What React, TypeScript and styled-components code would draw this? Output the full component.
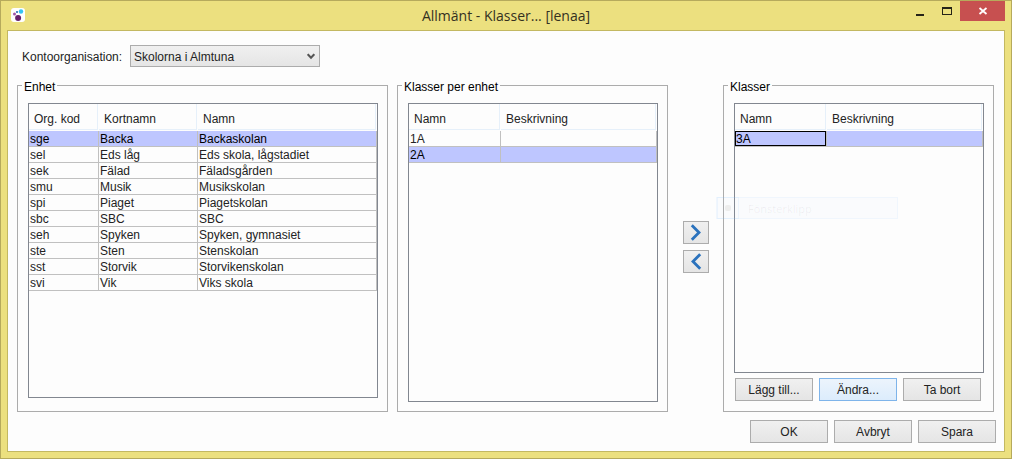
import React from 'react';
import styled, { createGlobalStyle, css } from 'styled-components';

const uiFont = '"Liberation Sans", Arial, sans-serif';
const titleFont = '"Open Sans", "Segoe UI", sans-serif';

const GlobalStyle = createGlobalStyle`
  *, *::before, *::after { box-sizing: border-box; }
  body {
    margin: 0;
    font-family: ${uiFont};
    font-size: 12px;
    line-height: 15px;
    color: #232323;
  }
  button, select { font: inherit; color: inherit; }
`;

const Window = styled.div`
  display: flex;
  flex-direction: column;
  min-height: 100vh;
  padding: 0 6px 6px;
  background: #ece07f;
  border: 1px solid #b6aa5c;
`;

const TitleBar = styled.header`
  display: grid;
  grid-template-columns: 1fr auto 1fr;
  height: 29px;
`;

const AppIcon = styled.svg`
  margin: 7px 0 0 4px;
`;

const Title = styled.h1`
  margin: 0;
  font-family: ${titleFont};
  font-size: 14px;
  font-weight: 400;
  line-height: 29px;
  color: #34311f;
`;

const Caption = styled.div`
  display: flex;
  justify-content: flex-end;
  align-items: flex-start;
`;

const CaptionButton = styled.button<{ $close?: boolean }>`
  display: flex;
  align-items: center;
  justify-content: center;
  width: ${(p) => (p.$close ? 45 : 26)}px;
  height: 20px;
  padding: 0;
  border: 0;
  background: ${(p) => (p.$close ? '#c75050' : 'transparent')};
`;

const Client = styled.main`
  flex: 1;
  display: flex;
  flex-direction: column;
  padding: 14px 8px 8px 9px;
  background: #fdfdfd;
  border: 1px solid #c3b861;
`;

const Field = styled.div`
  display: flex;
  align-items: center;
  margin-bottom: 9px;
  padding-left: 5px;
`;

const FieldLabel = styled.label`
  width: 108px;
  padding-top: 2px;
`;

const SelectBox = styled.div`
  position: relative;
  width: 190px;
`;

const Select = styled.select`
  display: block;
  appearance: none;
  width: 100%;
  height: 22px;
  padding: 2px 24px 0 3px;
  border: 1px solid #acacac;
  border-radius: 0;
  background: linear-gradient(#f0f0f0, #e5e5e5);
`;

const SelectArrow = styled.svg`
  position: absolute;
  top: 8px;
  right: 5px;
  pointer-events: none;
`;

const Columns = styled.div`
  flex: 1;
  display: grid;
  grid-template-columns: minmax(0, 371fr) minmax(0, 271fr) 37px minmax(0, 271fr);
  column-gap: 9px;
  padding-right: 2px;
`;

const Group = styled.fieldset`
  display: flex;
  flex-direction: column;
  min-width: 0;
  margin: 0;
  padding: 0;
  border: 1px solid #acacac;
`;

const Legend = styled.legend`
  margin-left: 4px;
  padding: 4px 2px 0;
  color: #000;
`;

const GroupBody = styled.div<{ $bottom: number }>`
  position: relative;
  flex: 1;
  display: flex;
  flex-direction: column;
  padding: 8px 9px ${(p) => p.$bottom}px 10px;
`;

const TableFrame = styled.div`
  flex: 1;
  border: 1px solid #828790;
`;

const Table = styled.table`
  width: 100%;
  table-layout: fixed;
  border-collapse: separate;
  border-spacing: 0;
`;

const HeadCell = styled.th`
  position: relative;
  height: 27px;
  padding: 3px 0 0 5px;
  font-weight: 400;
  text-align: left;

  &::after {
    content: '';
    position: absolute;
    inset: 0 1px 1px 0;
    border: solid #e6f0fa;
    border-width: 0 1px 1px 0;
  }
`;

const Row = styled.tr<{ $selected?: boolean }>`
  background: ${(p) => (p.$selected ? '#bec6ff' : 'transparent')};
  color: ${(p) => (p.$selected ? '#000' : 'inherit')};
`;

const Cell = styled.td<{ $focused?: boolean }>`
  height: 16px;
  padding: 2px 0 0 1px;
  line-height: 13px;
  border: solid #c0c0c0;
  border-width: 0 1px 1px 0;
  white-space: nowrap;
  ${(p) =>
    p.$focused &&
    css`
      box-shadow: inset 0 0 0 1px #000;
    `}
`;

const Movers = styled.div`
  display: flex;
  flex-direction: column;
  justify-content: center;
  gap: 6px;
  padding: 6px 5px 0 6px;
`;

const Button = styled.button<{ $hot?: boolean; $icon?: boolean }>`
  display: flex;
  align-items: center;
  justify-content: center;
  width: ${(p) => (p.$icon ? 26 : 78)}px;
  height: 23px;
  padding: ${(p) => (p.$icon ? 0 : 2)}px 0 0;
  border: 1px solid ${(p) => (p.$hot ? '#7eb4ea' : '#acacac')};
  background: ${(p) =>
    p.$hot ? 'linear-gradient(#ecf4fc, #dcecfc)' : 'linear-gradient(#f0f0f0, #e5e5e5)'};
`;

const GroupActions = styled.div`
  display: flex;
  gap: 6px;
  padding: 5px 0 0 1px;
`;

const Footer = styled.footer`
  display: flex;
  justify-content: flex-end;
  gap: 6px;
  margin-top: 8px;
`;

const FadingItem = styled.div`
  position: absolute;
  top: 102px;
  left: -8px;
  display: flex;
  align-items: center;
  gap: 9px;
  width: 182px;
  height: 22px;
  border: 1px solid rgba(120, 190, 255, 0.07);
  background: rgba(150, 205, 255, 0.03);
  font-family: ${titleFont};
  font-size: 11px;
  color: rgba(70, 50, 30, 0.07);
  pointer-events: none;
`;

const FadingMark = styled.span`
  display: flex;
  align-items: center;
  justify-content: center;
  width: 22px;
  height: 22px;
  border: 1px solid rgba(120, 190, 255, 0.1);

  &::before {
    content: '';
    width: 6px;
    height: 6px;
    border-radius: 2px;
    background: rgba(70, 50, 30, 0.07);
  }
`;

type DataTableProps = {
  label: string;
  columns: { title: string; width?: number }[];
  rows: string[][];
  selected: number;
  focusFirst?: boolean;
};

function DataTable({ label, columns, rows, selected, focusFirst }: DataTableProps) {
  return (
    <TableFrame>
      <Table aria-label={label}>
        <colgroup>
          {columns.map((c) => (
            <col key={c.title} width={c.width} />
          ))}
        </colgroup>
        <thead>
          <tr>
            {columns.map((c) => (
              <HeadCell key={c.title} scope="col">
                {c.title}
              </HeadCell>
            ))}
          </tr>
        </thead>
        <tbody>
          {rows.map((row, r) => (
            <Row key={row[0]} $selected={r === selected} aria-selected={r === selected}>
              {row.map((text, i) => (
                <Cell key={i} $focused={focusFirst && r === selected && i === 0}>
                  {text}
                </Cell>
              ))}
            </Row>
          ))}
        </tbody>
      </Table>
    </TableFrame>
  );
}

const units = [
  ['sge', 'Backa', 'Backaskolan'],
  ['sel', 'Eds låg', 'Eds skola, lågstadiet'],
  ['sek', 'Fälad', 'Fäladsgården'],
  ['smu', 'Musik', 'Musikskolan'],
  ['spi', 'Piaget', 'Piagetskolan'],
  ['sbc', 'SBC', 'SBC'],
  ['seh', 'Spyken', 'Spyken, gymnasiet'],
  ['ste', 'Sten', 'Stenskolan'],
  ['sst', 'Storvik', 'Storvikenskolan'],
  ['svi', 'Vik', 'Viks skola'],
];

const unitColumns = [
  { title: 'Org. kod', width: 70 },
  { title: 'Kortnamn', width: 99 },
  { title: 'Namn' },
];

const classColumns = [{ title: 'Namn', width: 92 }, { title: 'Beskrivning' }];

export default function App() {
  return (
    <>
      <GlobalStyle />
      <Window>
        <TitleBar>
          <AppIcon width="14" height="14" viewBox="0 0 14 14" aria-hidden="true">
            <rect width="14" height="14" rx="3" fill="#fff" />
            <circle cx="10" cy="3.5" r="2.2" fill="#35c3f3" />
            <circle cx="6" cy="4" r="1.1" fill="#2b6cb8" />
            <circle cx="3.5" cy="5.9" r="1.5" fill="#a055a8" />
            <circle cx="7.1" cy="10" r="3" fill="#66206c" />
          </AppIcon>
          <Title>Allmänt - Klasser... [lenaa]</Title>
          <Caption>
            <CaptionButton type="button" aria-label="Minimera">
              <svg width="10" height="10" aria-hidden="true">
                <rect x="0" y="8" width="8" height="2" fill="#262417" />
              </svg>
            </CaptionButton>
            <CaptionButton type="button" aria-label="Maximera">
              <svg width="10" height="8" aria-hidden="true">
                <path d="M0 0h10v8H0z M1 2v5h8V2z" fill="#262417" fillRule="evenodd" />
              </svg>
            </CaptionButton>
            <CaptionButton type="button" aria-label="Stäng" $close>
              <svg width="10" height="8" viewBox="0 0 10 8" aria-hidden="true">
                <path d="M1.5 1L8.5 7M8.5 1L1.5 7" stroke="#fff" strokeWidth="1.8" />
              </svg>
            </CaptionButton>
          </Caption>
        </TitleBar>
        <Client>
          <Field>
            <FieldLabel htmlFor="organisation">Kontoorganisation:</FieldLabel>
            <SelectBox>
              <Select id="organisation" defaultValue="almtuna">
                <option value="almtuna">Skolorna i Almtuna</option>
              </Select>
              <SelectArrow width="8" height="7" viewBox="0 0 8 7" aria-hidden="true">
                <path d="M0.7 1.2L4 4.8L7.3 1.2" fill="none" stroke="#555" strokeWidth="2" />
              </SelectArrow>
            </SelectBox>
          </Field>
          <Columns>
            <Group>
              <Legend>Enhet</Legend>
              <GroupBody $bottom={13}>
                <DataTable label="Enhet" columns={unitColumns} rows={units} selected={0} />
              </GroupBody>
            </Group>
            <Group>
              <Legend>Klasser per enhet</Legend>
              <GroupBody $bottom={9}>
                <DataTable
                  label="Klasser per enhet"
                  columns={classColumns}
                  rows={[['1A', ''], ['2A', '']]}
                  selected={1}
                />
              </GroupBody>
            </Group>
            <Movers>
              <Button type="button" $icon aria-label="Flytta till klasser">
                <svg width="12" height="17" viewBox="0 0 12 17" aria-hidden="true">
                  <path d="M1.8 1.2L9 8.5L1.8 15.8" fill="none" stroke="#2a72bd" strokeWidth="2.8" />
                </svg>
              </Button>
              <Button type="button" $icon aria-label="Flytta till enhet">
                <svg width="12" height="17" viewBox="0 0 12 17" aria-hidden="true">
                  <path d="M10.2 1.2L3 8.5L10.2 15.8" fill="none" stroke="#2a72bd" strokeWidth="2.8" />
                </svg>
              </Button>
            </Movers>
            <Group>
              <Legend>Klasser</Legend>
              <GroupBody $bottom={10}>
                <DataTable
                  label="Klasser"
                  columns={classColumns}
                  rows={[['3A', '']]}
                  selected={0}
                  focusFirst
                />
                <GroupActions>
                  <Button type="button">Lägg till...</Button>
                  <Button type="button" $hot>
                    Ändra...
                  </Button>
                  <Button type="button">Ta bort</Button>
                </GroupActions>
                <FadingItem>
                  <FadingMark />
                  Fönsterklipp
                </FadingItem>
              </GroupBody>
            </Group>
          </Columns>
          <Footer>
            <Button type="button">OK</Button>
            <Button type="button">Avbryt</Button>
            <Button type="button">Spara</Button>
          </Footer>
        </Client>
      </Window>
    </>
  );
}
